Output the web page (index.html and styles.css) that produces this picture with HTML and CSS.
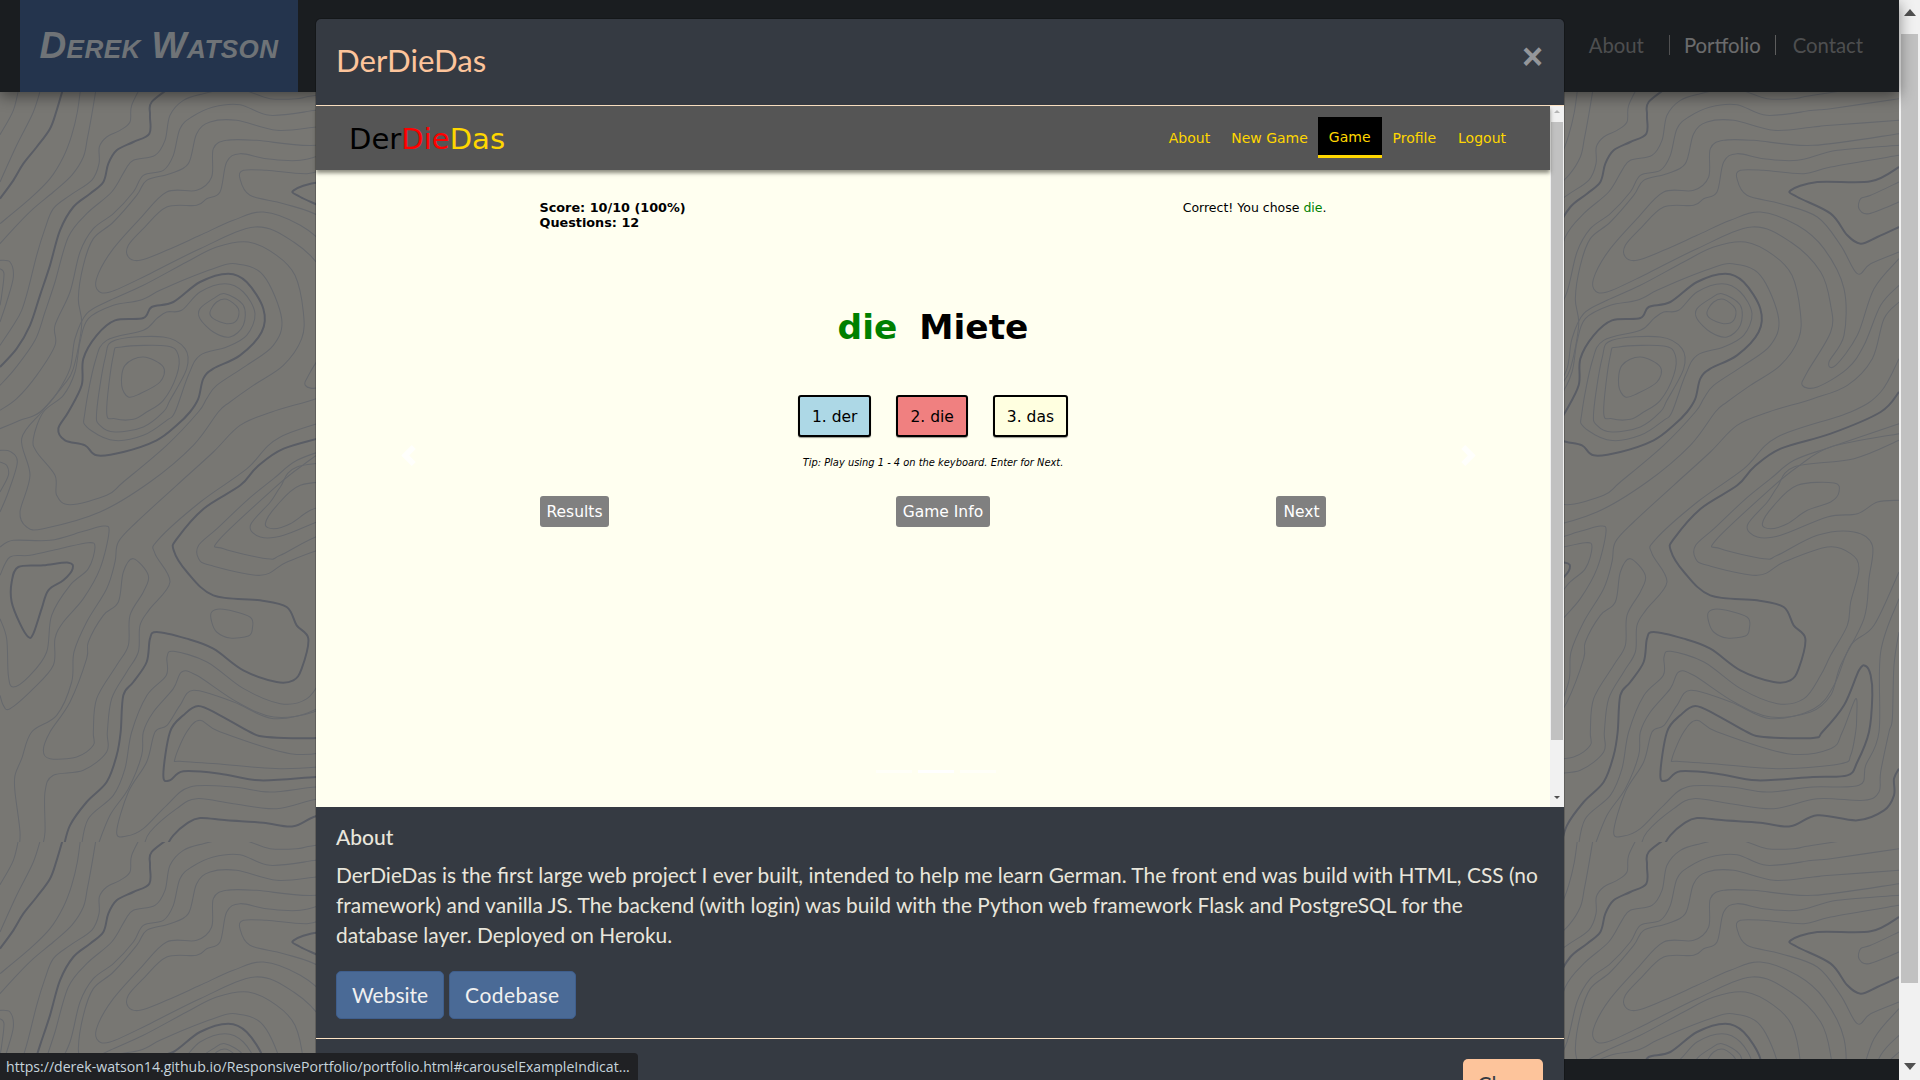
FILE: index.html
```html
<!DOCTYPE html>
<html lang="en">

<head>
    <meta charset="UTF-8">
    <meta name="viewport" content="width=device-width, initial-scale=1.0">
    <title>Portfolio</title>
    <link rel="stylesheet" href="styles.css">
</head>

<body>
    <div class="app">
        <div class="page">
            <nav class="site-nav">
                <a class="brand">Derek Watson</a>
                <ul class="site-links">
                    <li>About</li>
                    <li class="current">Portfolio</li>
                    <li>Contact</li>
                </ul>
            </nav>

            <svg class="topo" xmlns="http://www.w3.org/2000/svg">
                <defs>
                    <pattern id="topo-tile" width="1497" height="750" patternUnits="userSpaceOnUse">
                        <g id="topo-lines" transform="scale(0.33333)"></g>
                    </pattern>
                </defs>
                <rect width="100%" height="100%" fill="url(#topo-tile)"></rect>
            </svg>

            <div class="site-foot"></div>
            <div class="backdrop"></div>

            <div class="modal">
                <div class="modal-head">
                    <h5>DerDieDas</h5>
                    <span class="close-x">&times;</span>
                </div>

                <div class="frame">
                    <div class="frame-main">
                        <div class="game-nav">
                            <div class="game-logo">Der<span class="red">Die</span><span class="gold">Das</span></div>
                            <ul class="game-links">
                                <li>About</li>
                                <li>New Game</li>
                                <li class="active">Game</li>
                                <li>Profile</li>
                                <li>Logout</li>
                            </ul>
                        </div>
                        <div class="game">
                            <div class="game-top">
                                <div class="score">Score: 10/10 (100%)<br>Questions: 12</div>
                                <div>Correct! You chose <span class="green">die</span>.</div>
                            </div>
                            <div class="word"><span class="green">die</span><span class="noun">Miete</span></div>
                            <div class="choices">
                                <div class="choice der">1. der</div>
                                <div class="choice die">2. die</div>
                                <div class="choice das">3. das</div>
                            </div>
                            <div class="tip">Tip: Play using 1 - 4 on the keyboard. Enter for Next.</div>
                            <div class="game-actions">
                                <div class="grey-btn">Results</div>
                                <div class="grey-btn">Game Info</div>
                                <div class="grey-btn">Next</div>
                            </div>
                        </div>
                        <svg class="chev chev-prev" viewBox="0 0 8 8"><path d="M5.25 0l-4 4 4 4 1.5-1.5-2.5-2.5 2.5-2.5-1.5-1.5z"></path></svg>
                        <svg class="chev chev-next" viewBox="0 0 8 8"><path d="M2.75 0l-1.5 1.5 2.5 2.5-2.5 2.5 1.5 1.5 4-4-4-4z"></path></svg>
                        <div class="dots"><span></span><span class="on"></span><span></span></div>
                    </div>
                    <div class="frame-scroll">
                        <i class="tri up"></i>
                        <div class="frame-thumb"></div>
                        <i class="tri down"></i>
                    </div>
                </div>

                <div class="modal-body">
                    <h5>About</h5>
                    <p>DerDieDas is the first large web project I ever built, intended to help me learn German. The front end was build with HTML, CSS (no<br>framework) and vanilla JS. The backend (with login) was build with the Python web framework Flask and PostgreSQL for the<br>database layer. Deployed on Heroku.</p>
                    <div class="links">
                        <a class="blue-btn">Website</a>
                        <a class="blue-btn">Codebase</a>
                    </div>
                </div>

                <div class="modal-foot">
                    <a class="peach-btn">Close</a>
                </div>
            </div>
        </div>

        <div class="page-scroll">
            <i class="tri up big"></i>
            <div class="page-thumb"></div>
            <i class="tri down big"></i>
        </div>

        <div class="status">https://derek-watson14.github.io/ResponsivePortfolio/portfolio.html#carouselExampleIndicat...</div>
    </div>

    <script src="topo.js"></script>
</body>

</html>
```

FILE: styles.css
```css
* {
    box-sizing: border-box;
}

body {
    margin: 0;
    overflow: hidden;
    font-family: "Lato", "Open Sans", sans-serif;
}

h5, p, ul {
    margin: 0;
    padding: 0;
}

ul {
    list-style: none;
}

.app {
    position: relative;
    display: flex;
    width: 1920px;
    height: 1080px;
    overflow: hidden;
}

.page {
    position: relative;
    display: flex;
    flex-direction: column;
    flex: 1;
    background-color: #f0eee6;
}

/* site navbar */
.site-nav {
    position: relative;
    z-index: 1;
    display: flex;
    justify-content: space-between;
    align-items: center;
    height: 92px;
    padding-left: 20px;
    padding-right: 22px;
    background-color: #343a40;
    box-shadow: 0 4px 14px rgba(0, 0, 0, 0.45);
}

.brand {
    display: flex;
    align-items: center;
    justify-content: center;
    width: 278px;
    height: 92px;
    background-color: #48689a;
    color: #dfe6ee;
    font-family: "Liberation Sans", sans-serif;
    font-size: 37px;
    font-style: italic;
    font-weight: bold;
    font-variant: small-caps;
    letter-spacing: 0.5px;
}

.site-links {
    display: flex;
    margin-top: -2px;
    font-size: 20.3px;
    color: #9b9d9f;
}

.site-links li {
    height: 20px;
    line-height: 20px;
    padding: 0 14px;
    border-left: 1px solid #bbb;
}

.site-links li:first-child {
    border-left: none;
    padding-right: 25px;
}

.site-links li:last-child {
    padding-left: 17px;
}

.site-links .current {
    color: #fff;
    opacity: 0.8;
}

.topo {
    display: block;
    flex: 1;
    width: 100%;
    min-height: 0;
}

.site-foot {
    height: 21px;
    background-color: #343a40;
}

.backdrop {
    position: absolute;
    top: 0;
    right: 0;
    bottom: 0;
    left: 0;
    z-index: 2;
    background-color: rgba(0, 0, 0, 0.5);
}

/* modal */
.modal {
    position: absolute;
    top: 19px;
    left: 316px;
    z-index: 3;
    width: 1248px;
    background-color: #353a42;
    border-radius: 5px 5px 0 0;
    box-shadow: 0 0 0 1px rgba(0, 0, 0, 0.2);
}

.modal-head {
    display: flex;
    justify-content: space-between;
    height: 87px;
    padding: 23px 21px 0 20px;
    border-bottom: 1px solid #fde3c4;
}

.modal-head h5 {
    color: #fdc49b;
    font-size: 31.2px;
    font-weight: 400;
    line-height: 36px;
}

.close-x {
    margin-top: -3px;
    color: #94969a;
    font-family: "Liberation Sans", sans-serif;
    font-size: 36px;
    font-weight: bold;
    line-height: 36px;
}

.frame {
    display: flex;
    height: 701px;
    font-family: "DejaVu Sans", sans-serif;
}

.frame-main {
    position: relative;
    flex: 1;
    background-color: #fffff0;
}

.frame-scroll {
    display: flex;
    flex-direction: column;
    align-items: center;
    width: 14px;
    background-color: #f1f1f1;
}

.frame-thumb {
    width: 12px;
    height: 618px;
    margin-top: 9px;
    background-color: #c1c1c1;
}

.tri {
    display: block;
    width: 0;
    height: 0;
    border-left: 3px solid transparent;
    border-right: 3px solid transparent;
}

.tri.up {
    margin-top: 4px;
    border-bottom: 3px solid #b5b5b5;
}

.tri.down {
    margin-top: 56px;
    border-top: 3px solid #505050;
}

.game-nav {
    display: flex;
    justify-content: space-between;
    align-items: flex-start;
    height: 64px;
    padding: 0 33px 0 33px;
    background-color: #555;
    box-shadow: 0 3px 4px rgba(60, 60, 50, 0.6);
}

.game-logo {
    margin-top: 13px;
    font-size: 29.1px;
    line-height: 40px;
    color: #000;
}

.red {
    color: #f00;
}

.gold {
    color: #ffd700;
}

.game-links {
    display: flex;
    margin-top: 11px;
    color: #ffd700;
    font-size: 14px;
}

.game-links li {
    height: 41px;
    padding: 0 11px;
    line-height: 42px;
}

.game-links li:first-child {
    padding-right: 10px;
}

.game-links li:nth-child(2) {
    padding-right: 10px;
}

.game-links .active {
    background-color: #000;
    border-bottom: 3px solid #ffd700;
    line-height: 40px;
}

.game {
    width: 787px;
    margin: 0 auto;
    padding-top: 30px;
    color: #000;
}

.game-top {
    display: flex;
    justify-content: space-between;
    font-size: 12.5px;
    line-height: 15px;
}

.score {
    font-size: 12.8px;
    font-weight: bold;
}

.green {
    color: #008000;
}

.word {
    display: flex;
    justify-content: center;
    gap: 22px;
    height: 44px;
    margin-top: 75px;
    font-size: 34.4px;
    font-weight: bold;
    line-height: 44px;
}

.choices {
    display: flex;
    justify-content: center;
    gap: 25px;
    margin-top: 46px;
}

.choice {
    height: 42px;
    padding: 0 12px;
    border: 2px solid #000;
    border-radius: 3px;
    font-size: 15.5px;
    line-height: 41px;
    box-shadow: 0 1px 1px rgba(0, 0, 0, 0.4);
}

.der {
    background-color: lightblue;
}

.die {
    background-color: lightcoral;
}

.das {
    background-color: lightyellow;
}

.tip {
    margin-top: 18px;
    font-size: 9.9px;
    font-style: italic;
    line-height: 16px;
    text-align: center;
}

.game-actions {
    display: flex;
    justify-content: space-between;
    margin-top: 25px;
}

.grey-btn {
    height: 31px;
    padding: 0 7px;
    background-color: #808080;
    border-radius: 3px;
    color: #fff;
    font-size: 15.5px;
    line-height: 33px;
}

.chev {
    position: absolute;
    top: 339px;
    width: 21px;
    height: 21px;
    fill: #fff;
    opacity: 0.85;
}

.chev-prev {
    left: 82px;
}

.chev-next {
    right: 71px;
}

.dots {
    position: absolute;
    top: 664px;
    left: 560px;
    display: flex;
    gap: 6px;
}

.dots span {
    width: 36px;
    height: 3px;
    background-color: #fff;
    opacity: 0.5;
}

.dots .on {
    opacity: 1;
}

.modal-body {
    height: 232px;
    padding: 17px 20px 0;
    border-bottom: 1px solid #fde3c4;
    color: #e9e6dc;
}

.modal-body h5 {
    font-size: 21px;
    font-weight: 500;
    line-height: 26px;
}

.modal-body p {
    margin-top: 10px;
    font-size: 20.9px;
    line-height: 30px;
}

.links {
    display: flex;
    gap: 5px;
    margin-top: 21px;
}

.blue-btn {
    height: 48px;
    padding: 0 15px;
    background-color: #4a6a96;
    border: 1px solid #3f5e8c;
    border-radius: 5px;
    color: #f0f0f0;
    font-size: 21px;
    line-height: 46px;
}

.blue-btn + .blue-btn {
    letter-spacing: 0.45px;
}

.modal-foot {
    display: flex;
    justify-content: flex-end;
    height: 80px;
    padding: 20px 21px 0;
}

.peach-btn {
    width: 80px;
    height: 48px;
    background-color: #fdc49b;
    border-radius: 5px;
    color: #353a42;
    font-size: 21px;
    line-height: 50px;
    text-align: center;
}

/* browser chrome */
.page-scroll {
    display: flex;
    flex-direction: column;
    align-items: center;
    width: 21px;
    background-color: #f1f1f1;
}

.page-thumb {
    width: 17px;
    height: 949px;
    margin-top: 18px;
    background-color: #c1c1c1;
}

.tri.big {
    border-left-width: 6px;
    border-right-width: 6px;
}

.tri.big.up {
    margin-top: 9px;
    border-bottom: 7px solid #505050;
}

.tri.big.down {
    margin-top: 80px;
    border-top: 7px solid #505050;
}

.status {
    position: absolute;
    left: 0;
    bottom: 0;
    z-index: 5;
    width: 638px;
    height: 27px;
    padding-left: 6px;
    background-color: #202124;
    border-radius: 0 4px 0 0;
    color: #c6d4dc;
    font-family: "Open Sans", sans-serif;
    font-size: 14.1px;
    line-height: 27px;
    white-space: nowrap;
}
```

FILE: topo.js
```js
// contour lines of the page background, x/y are in 3x tile units
let thinLines = [
    [58,-20, 40,55, 0,128],
    [125,-20, 100,60, 50,160, 0,270],
    [243,-20, 232,60, 215,130, 190,195, 150,260, 90,320, 0,395],
    [290,-20, 275,70, 262,140, 250,195, 215,250, 160,300, 100,350, 50,400, 0,455],
    [430,-30, 395,40, 390,90, 360,115, 320,135, 298,165, 297,215, 275,265, 210,310, 160,350, 135,410, 110,490, 85,590, 65,655, 40,700, 0,760],
    [1206,-30, 948,10, 890,20, 810,20, 750,0, 700,-12, 610,5, 550,25, 510,70, 495,145, 465,190, 400,205, 375,235, 335,300, 260,365, 205,435, 165,570, 135,660, 105,745, 45,830, 0,880],
    [1206,20, 1001,50, 948,55, 810,70, 720,38, 640,45, 575,75, 540,110, 520,190, 490,235, 430,250, 400,300, 340,365, 280,410, 240,480, 210,600, 165,700, 165,760, 110,850, 50,920, 0,955],
    [1206,85, 1001,100, 948,105, 830,115, 710,85, 630,90, 590,125, 565,215, 510,245, 440,265, 410,310, 340,390, 280,440, 250,520, 235,620, 245,700, 220,830, 190,880, 120,960, 60,985, 0,1010],
    // noses that close to the right
    [1206,125, 948,160, 770,145, 680,145, 640,170, 635,255, 590,295, 500,300, 420,380, 340,470, 295,545, 290,590, 330,600, 450,545, 600,470, 765,405, 881,450, 971,540, 1001,640, 1001,720, 931,840, 916,880, 961,885, 1051,830, 1101,760, 1151,640, 1206,580],
    [1206,160, 1021,175, 901,205, 800,200, 720,185, 680,210, 660,300, 620,320, 590,340, 500,345, 430,410, 385,460, 385,495, 420,505, 500,475, 600,430, 700,385, 790,360, 901,400, 981,470, 1041,590, 1041,730, 996,810, 1016,820, 1081,730, 1131,590, 1206,500],
    [1206,190, 1001,225, 921,245, 800,235, 730,235, 720,260, 750,310, 851,335, 961,375, 1031,460, 1081,545, 1121,515, 1206,480],
    [1206,270, 1121,310, 1091,320, 1086,350, 1116,365, 1206,330],
    // peak and its rings
    [680,622, 715,650, 710,685, 680,695, 640,680, 630,660, 650,630, 680,622],
    [675,605, 730,640, 730,700, 690,735, 640,720, 600,680, 600,650, 640,620, 675,605],
    [255,960, 285,810, 320,745, 430,715, 470,680, 500,660, 545,655, 600,600, 675,575, 730,600, 765,665, 740,730, 680,765, 600,790, 565,850, 525,960, 500,985, 430,1030, 340,1045, 260,1005, 255,960],
    [290,960, 315,800, 345,745, 490,735, 555,770, 560,830, 510,925, 490,960, 430,1005, 345,1020, 300,1000, 290,960],
    [320,960, 340,790, 365,765, 500,762, 535,790, 530,850, 490,925, 440,960, 400,982, 345,980, 320,960],
    [430,795, 490,825, 480,870, 420,905, 385,915, 365,880, 375,820, 430,795],
    [705,515, 790,550, 845,680, 820,760, 740,820, 650,880, 620,920, 595,960, 500,1060, 370,1170, 320,1210, 210,1238, 170,1210, 165,1150, 110,1080, 100,1040, 130,960, 190,910, 225,840, 240,750, 265,680, 340,640, 420,625, 480,595, 560,560, 640,530, 705,515],
    [745,450, 830,490, 885,550, 910,660, 905,740, 850,820, 760,880, 690,930, 655,960, 580,1060, 450,1170, 300,1260, 130,1310, 80,1305, 60,1260, 90,1150, 65,1040, 125,960, 170,905, 210,830, 225,740, 260,665, 330,625, 430,580, 560,510, 650,465, 745,450],
    // left side
    [0,505, 30,510, 40,555, 20,630, 0,690],
    [0,530, 12,545, 5,610, 0,640],
    [0,1075, 30,1078, 52,1110, 25,1200, 0,1260],
    [0,1110, 20,1120, 25,1150, 0,1200],
    [0,1365, 40,1345, 150,1345, 250,1318, 310,1302, 327,1320, 300,1430, 250,1520, 190,1590, 165,1640, 160,1720, 100,1790, 30,1850, 10,1840, 0,1810],
    [0,1450, 30,1395, 90,1390, 180,1370, 265,1352, 285,1365, 265,1430, 210,1480, 155,1570, 140,1680, 90,1750, 40,1785, 25,1750, 20,1640, 0,1580],
    [400,1400, 445,1450, 430,1500, 390,1570, 385,1660, 350,1720, 290,1820, 280,1920, 280,1960, 230,1995, 150,2000, 130,1975, 150,1920, 210,1830, 260,1700, 265,1650, 310,1570, 355,1530, 370,1440, 400,1400],
    // long ones running down to the bottom seam
    [1206,630, 1161,680, 1126,800, 1051,880, 948,920, 815,960, 720,1000, 640,1080, 530,1180, 410,1290, 355,1350, 345,1410, 320,1490, 260,1590, 222,1680, 215,1770, 170,1870, 95,1920, 65,2000, 45,2050, 45,2100, 60,2220, 55,2280],
    [1206,800, 1151,900, 1061,960, 841,1035, 741,1130, 601,1230, 473,1345, 465,1385, 510,1470, 450,1550, 420,1600, 415,1680, 380,1740, 335,1820, 322,1920, 320,1980, 250,2035, 160,2050, 135,2100, 135,2220, 125,2270],
    [1206,995, 1001,1065, 891,1105, 821,1160, 741,1225, 651,1310, 596,1360, 596,1400, 631,1420, 781,1450, 861,1410, 991,1365, 1061,1385, 1086,1430, 1061,1530, 1051,1600, 1001,1690, 971,1750, 921,1820, 841,1835, 731,1790, 621,1710, 521,1678, 501,1695, 499,1750, 441,1810, 395,1920, 375,2030, 340,2110, 265,2180, 243,2270],
    [1206,1025, 1001,1065, 901,1125, 821,1190, 656,1345, 671,1370, 801,1400, 841,1390, 961,1330, 1071,1320, 1126,1360, 1116,1460, 1101,1580, 1031,1720, 1001,1810, 941,1860, 821,1875, 711,1830, 590,1750, 545,1740, 520,1790, 460,1860, 430,1920, 425,1990, 385,2090, 330,2170, 290,2270],
    [1206,1045, 1071,1100, 891,1125, 841,1185, 811,1230, 751,1300, 781,1335, 851,1330, 991,1275, 1081,1265, 1141,1230, 1206,1225],
    [901,1180, 1011,1173, 1026,1200, 1001,1230, 931,1255, 871,1295, 821,1310, 796,1295, 831,1240, 901,1180],
    [635,1560, 670,1552, 750,1575, 757,1610, 745,1632, 690,1638, 650,1620, 635,1590, 635,1560],
    [1206,1440, 1131,1600, 1061,1660, 1011,1780, 951,1850, 821,1880, 701,1830, 581,1795, 540,1840, 501,1900, 465,1920, 440,2010, 385,2100, 350,2220, 380,2232, 430,2210, 500,2140, 570,2085, 700,2085, 810,2100, 948,2085, 1086,2080, 1106,2020, 1146,1920, 1151,1680, 1206,1520],
    [661,1920, 871,1985, 1001,1970, 1036,1920, 1076,1820, 1079,1880, 1076,1920, 1061,1990, 1031,2015, 851,2030, 650,2015, 540,2008, 525,2000, 560,1920, 600,1885, 661,1920],
    [1206,1620, 1191,1720, 1186,1880, 1176,1920, 1151,2040, 1146,2100, 1101,2125, 961,2120, 830,2150, 700,2135, 590,2120, 530,2150, 450,2220, 430,2270]
];

let thickLines = [
    [192,-20, 170,55, 150,110, 110,165, 70,215, 40,265, 0,320],
    [520,-20, 455,30, 450,70, 448,125, 400,150, 350,175, 325,215, 310,270, 270,305, 220,345, 180,415, 150,520, 120,610, 90,700, 50,770, 0,825],
    [1206,2030, 1191,2060, 1191,2110, 1161,2155, 1081,2185, 961,2170, 880,2203, 790,2192, 680,2185, 600,2178, 560,2195, 520,2230, 500,2262],
    [205,960, 245,880, 250,800, 290,730, 345,685, 430,678, 455,645, 520,630, 600,570, 685,545, 740,570, 790,650, 785,720, 720,790, 640,830, 610,860, 595,920, 570,960, 530,1000, 470,1045, 370,1080, 290,1090, 255,1060, 195,1045, 175,1010, 205,960],
    [1206,900, 1151,960, 1001,1025, 851,1070, 771,1125, 721,1180, 611,1250, 531,1340, 521,1375, 561,1440, 640,1510, 780,1525, 860,1545, 890,1600, 925,1640, 905,1730, 880,1765, 830,1770, 730,1735, 640,1670, 560,1640, 470,1620, 450,1640, 440,1710, 400,1770, 370,1810, 362,1920, 350,1990, 320,2070, 260,2130, 210,2200, 190,2270],
    [55,1425, 130,1420, 205,1412, 218,1430, 190,1465, 145,1495, 125,1550, 100,1625, 85,1635, 60,1595, 35,1530, 35,1470, 55,1425],
    [1206,225, 1121,268, 961,270, 881,295, 901,315, 1001,365, 1051,430, 1091,455, 1141,435, 1206,405],
    [948,1938, 976,1920, 1041,1840, 1086,1735, 1106,1722, 1121,1750, 1126,1810, 1116,1920, 1081,2010, 1051,2050, 948,2055, 780,2065, 660,2045, 550,2038, 510,2065, 490,2050, 510,1920, 550,1870, 595,1842, 660,1870, 750,1920, 800,1935, 948,1938]
];

let topoGroup = document.getElementById('topo-lines');

// catmull-rom through the points, so that the lines stay round
function smoothPath(nums) {
    let pts = [];
    for (let i = 0; i < nums.length; i += 2) {
        pts.push([nums[i], nums[i + 1]]);
    }
    let n = pts.length;
    let closed = pts[0][0] == pts[n - 1][0] && pts[0][1] == pts[n - 1][1];
    let at = function (i) {
        if (closed) {
            return pts[(i + n - 1) % (n - 1)];
        }
        return pts[Math.max(0, Math.min(n - 1, i))];
    };
    let d = 'M' + pts[0][0] + ' ' + pts[0][1];
    for (let i = 0; i < n - 1; i++) {
        let p0 = at(i - 1), p1 = at(i), p2 = at(i + 1), p3 = at(i + 2);
        d += 'C' + (p1[0] + (p2[0] - p0[0]) / 6).toFixed(1) + ' ' + (p1[1] + (p2[1] - p0[1]) / 6).toFixed(1) +
            ' ' + (p2[0] - (p3[0] - p1[0]) / 6).toFixed(1) + ' ' + (p2[1] - (p3[1] - p1[1]) / 6).toFixed(1) +
            ' ' + p2[0] + ' ' + p2[1];
    }
    return d;
}

function addLines(lines, color, width) {
    for (let i = 0; i < lines.length; i++) {
        let path = document.createElementNS('http://www.w3.org/2000/svg', 'path');
        path.setAttribute('d', smoothPath(lines[i]));
        path.setAttribute('fill', 'none');
        path.setAttribute('stroke', color);
        path.setAttribute('stroke-width', width);
        topoGroup.appendChild(path);
    }
}

addLines(thinLines, '#cdd2da', 3.2);
addLines(thickLines, '#b4bbca', 6);
```
